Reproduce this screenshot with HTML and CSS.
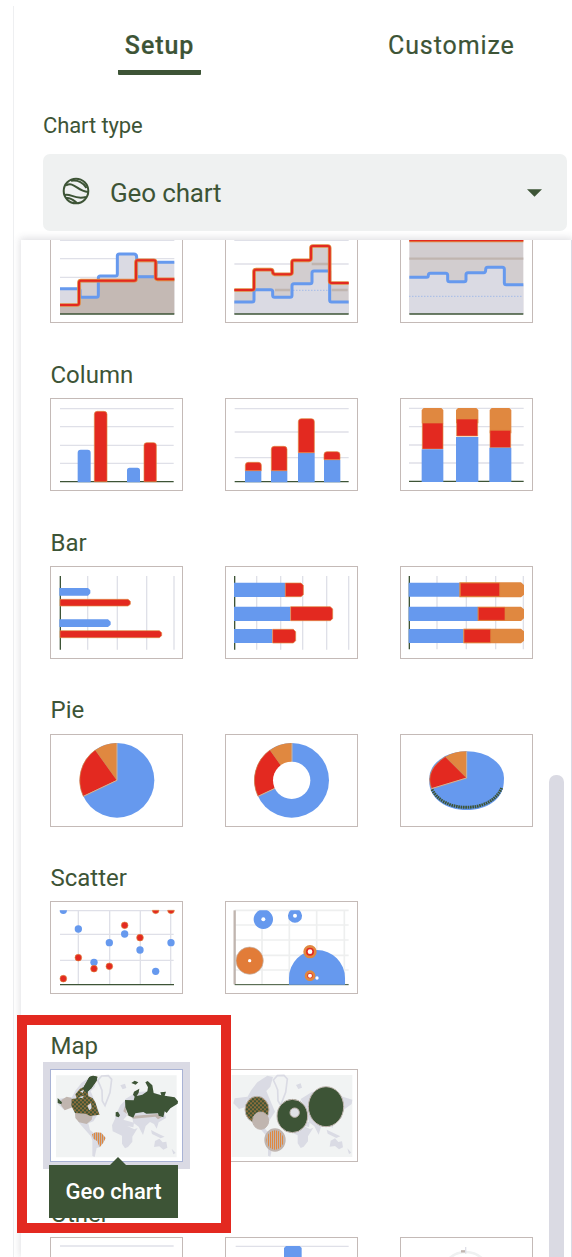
FILE: index.html
```html
<!DOCTYPE html>
<html lang="en">
<head>
<meta charset="utf-8">
<title>Chart editor</title>
<link rel="stylesheet" href="styles.css">
</head>
<body>
<main class="editor">
  <nav class="tabs">
    <span class="tab tab-active">Setup</span>
    <span class="tab">Customize</span>
  </nav>
  <div class="label">Chart type</div>
  <div class="select">
    <svg class="globe" viewBox="0 0 28 28"><circle cx="14" cy="14" r="12.3"/><path d="M4 8.5C12 4 15 14 26 15M9 3.8C16 2.5 22 6 24.5 11M2.5 18C9 16 12 23 24 20M4 21C9 20 12 24 15 26"/></svg>
    <span class="value">Geo chart</span>
    <svg class="caret" viewBox="0 0 16 8"><path d="M0 0H16L8 8Z"/></svg>
  </div>

  <section class="panel">
    <div class="cards">
      <svg class="card" viewBox="60 0 399 279">
        <defs><path id="steps" d="M90 225H141Q147 225 147 219V158Q147 152 153 152H312Q318 152 318 146V97Q318 91 324 91H371Q377 91 377 97V142Q377 148 383 148H433"/></defs>
        <path class="grid" d="M90 31H433M90 86H433M90 142H433"/>
        <path class="area" d="M90 176H150V202H205V138H262V72H320V140H378V97H433V252H90Z"/>
        <path class="area2" d="M90 225H147V152H318V91H377V148H433V252H90Z"/>
        <path class="area3" d="M154 158H201V198H154ZM324 97H372V136H324Z"/>
        <path class="bline" d="M90 176H145Q150 176 150 182V196Q150 202 156 202H199Q205 202 205 196V144Q205 138 211 138H256Q262 138 262 132V78Q262 72 268 72H312Q320 72 320 82V134Q320 140 326 140H372Q378 140 378 134V103Q378 97 384 97H433"/>
        <use href="#steps" class="oline"/><use href="#steps" class="rline"/>
        <path class="axis" d="M90 252H433"/>
      </svg>
      <svg class="card" viewBox="585 0 399 279">
        <defs><path id="steps2" d="M613 180H666Q672 180 672 174V125Q672 119 678 119H722Q728 119 728 125T734 133H780Q786 133 786 127V97Q786 91 792 91H837Q843 91 843 85V54Q843 48 849 48H893Q899 48 899 54V153Q899 159 905 159H956"/></defs>
        <path class="grid" d="M613 31H956M613 102H956"/>
        <path class="area3" d="M613 180H672V119H728V133H786V91H843V48H899V159H956V252H613Z"/>
        <path class="area" d="M613 216H672V179H728V202H786V161H846V123H899V216H956V252H613Z"/>
        <path class="tline" d="M735 180H780M845 102H895M905 180H953"/>
        <path class="dots" d="M790 181H897"/>
        <path class="bline" d="M613 216H666Q672 216 672 210V185Q672 179 678 179H722Q728 179 728 185V196Q728 202 734 202H780Q786 202 786 196V167Q786 161 792 161H840Q846 161 846 155V129Q846 123 852 123H899V210Q899 216 905 216H956"/>
        <use href="#steps2" class="oline"/><use href="#steps2" class="rline"/>
        <path class="axis" d="M613 252H956"/>
      </svg>
      <svg class="card" viewBox="90 15 399 279">
        <path class="area3" d="M118 47H460V267H118Z"/>
        <path class="area" d="M118 157H175V145H233V170H288V143H347V127H403V179H460V267H118Z"/>
        <path class="tline" d="M118 101H460"/>
        <path class="bline" d="M118 157H170Q175 157 175 151T181 145H227Q233 145 233 151V164Q233 170 239 170H282Q288 170 288 164V149Q288 143 294 143H341Q347 143 347 135T353 127H397Q403 127 403 133V173Q403 179 409 179H460"/>
        <path class="dots" d="M118 214H460"/>
        <path class="oline" d="M118 46H460"/><path class="rline" d="M118 46H460"/>
        <path class="axis" d="M118 267H460"/>
      </svg>
    </div>

    <h2>Column</h2>
    <div class="cards">
      <svg class="card" viewBox="30 144 399 279">
        <path class="grid" d="M60 176H401M60 230H401M60 286H401M60 340H401"/>
        <path class="axis" d="M60 395H401"/>
        <path class="blue" d="M113 397V308Q113 299 122 299H143Q152 299 152 308V397ZM261 397V361Q261 353 269 353H292Q300 353 300 361V397Z"/>
        <path class="red" d="M163 395V193Q163 184 172 184H192Q201 184 201 193V395ZM312 395V286Q312 278 320 278H341Q349 278 349 286V395Z"/>
      </svg>
      <svg class="card" viewBox="555 144 399 279">
        <path class="grid" d="M584 176H926M584 246H926M584 323H926"/>
        <path class="axis" d="M584 395H926"/>
        <path class="blue" d="M615 362H664V397H615ZM693 362H742V397H693ZM774 309H824V397H774ZM852 330H901V397H852Z"/>
        <path class="red" d="M616 362V346Q616 337 625 337H655Q664 337 664 346V362ZM694 362V298Q694 289 703 289H732Q741 289 741 298V362ZM775 308V215Q775 206 784 206H814Q823 206 823 215V308ZM852 329V314Q852 305 861 305H891Q900 305 900 314V329Z"/>
      </svg>
      <svg class="card" viewBox="30 54 399 279">
        <path class="grid" d="M57 85H401M57 140H401M57 195H401M57 249H401"/>
        <path class="axis" d="M57 304H401"/>
        <path class="orange" d="M95 130V90L101 84H154L160 90V130ZM198 130V90L204 84H259L265 90V130ZM299 160V90L305 84H358L364 90V160Z"/>
        <path class="red" d="M97 129H159V207H97ZM200 117H263V168H200ZM300 151H362V203H300Z"/>
        <path class="blue" d="M95 208H160V306H95ZM198 171H265V306H198ZM298 203H364V306H298Z"/>
      </svg>
    </div>

    <h2>Bar</h2>
    <div class="cards">
      <svg class="card" viewBox="30 138 399 279">
        <path class="grid" d="M143 168V389M232 168V389M320 168V389M402 168V389"/>
        <path class="axis" d="M61 168V389"/>
        <path class="blue" d="M58 204H144L151 211V220L144 227H58ZM58 298H204L212 305V314L204 321H58Z"/>
        <path class="red" d="M60 238H264L271 244V253L264 258H60ZM60 332H358L365 338V347L358 353H60Z"/>
      </svg>
      <svg class="card" viewBox="555 138 399 279">
        <path class="grid" d="M650 168V389M722 168V389M788 168V389M860 168V389M926 168V389"/>
        <path class="axis" d="M584 168V389"/>
        <path class="blue" d="M582 188H736V231H582ZM582 260H751V303H582ZM582 327H697V369H582Z"/>
        <path class="red" d="M736 189H783L790 196V224L783 230H736ZM752 260H871L878 267V296L871 302H752ZM698 328H760L767 335V362L760 369H698Z"/>
      </svg>
      <svg class="card" viewBox="30 558 399 279">
        <path class="grid" d="M141 588V808M229 588V808M317 588V808M400 588V808"/>
        <path class="axis" d="M58 588V808"/>
        <path class="blue" d="M56 608H210V650H56ZM56 680H264V723H56ZM56 747H221V789H56Z"/>
        <path class="orange" d="M208 607H393L402 615V644L393 652H208ZM263 680H393L402 688V715L393 723H263ZM220 746H393L402 754V782L393 790H220Z"/>
        <path class="red" d="M211 609H329V649H211ZM265 682H345V721H265ZM222 748H302V788H222Z"/>
      </svg>
    </div>

    <h2>Pie</h2>
    <div class="cards">
      <svg class="card" viewBox="30 131 399 279">
        <circle class="blue" cx="231" cy="270" r="112"/>
        <path class="red" d="M231 270L130 318A112 112 0 0 1 166 179Z"/>
        <path class="orange" d="M231 270L166 179A112 112 0 0 1 231 158Z"/>
        <path class="seam" d="M231 158V270L130 318"/>
      </svg>
      <svg class="card" viewBox="555 131 399 279">
        <circle class="blue" cx="755" cy="270" r="112"/>
        <path class="red" d="M755 270L654 318A112 112 0 0 1 690 179Z"/>
        <path class="orange" d="M755 270L690 179A112 112 0 0 1 756 158Z"/>
        <path class="seam" d="M756 158V270L654 318"/>
        <circle class="hole" cx="755" cy="270" r="56"/>
      </svg>
      <svg class="card" viewBox="30 41 399 279">
        <path class="blue" d="M118 173V190C122 235 168 269 230 269S338 235 341 190V173Z"/>
        <ellipse class="blue" cx="230" cy="173" rx="112" ry="80"/>
        <path class="rim" d="M126 207C145 244 185 261 230 261S318 242 335 203"/>
        <path class="red" d="M230 173L125 205Q103 151 166 109Z"/>
        <path class="orange" d="M230 173L166 109Q195 93 230 93Z"/>
        <path class="seam" d="M230 93V173L124 205"/>
      </svg>
    </div>

    <h2>Scatter</h2>
    <div class="cards">
      <svg class="card" viewBox="30 123 399 279">
        <path class="grid" d="M60 152H401M60 223H401M60 301H401M115 152V373M209 152V373M301 152V373M392 152V373"/>
        <path class="axis" d="M60 374H402"/>
        <g class="blue"><path d="M59 151H81A11 11 0 0 1 59 151Z"/><circle cx="115" cy="207" r="11"/><circle cx="162" cy="307" r="11"/><circle cx="208" cy="248" r="11"/><circle cx="254" cy="222" r="11"/><circle cx="300" cy="270" r="11"/><circle cx="347" cy="334" r="11"/><circle cx="393" cy="248" r="11"/></g>
        <g class="red"><path d="M337 151H357A10 10 0 0 1 337 151ZM383 151H403A10 10 0 0 1 383 151Z"/><circle cx="70" cy="356" r="10"/><circle cx="115" cy="293" r="10"/><circle cx="162" cy="326" r="10"/><circle cx="208" cy="319" r="10"/><circle cx="254" cy="196" r="10"/><circle cx="300" cy="233" r="10"/></g>
      </svg>
      <svg class="card" viewBox="555 123 399 279">
        <path class="pale" d="M584 151H926M584 195H926M584 240H926M584 286H926M584 330H926M666 151V373M748 151V373M830 151V373M913 151V373"/>
        <path class="tline" d="M584 151V373"/>
        <path class="axis thin" d="M584 374H926"/>
        <path class="blue" d="M681 151A29 29 0 1 1 659 151ZM778 151A21 21 0 1 1 752 151ZM747 374V354A84 84 0 0 1 915 354V374Z"/>
        <circle class="bubble" cx="629" cy="302" r="41"/>
        <g class="target"><circle cx="810" cy="275" r="16"/><circle cx="810" cy="347" r="12"/></g>
        <g class="hole"><circle cx="670" cy="178" r="6"/><circle cx="765" cy="167" r="6"/><circle cx="629" cy="302" r="5"/><circle cx="810" cy="275" r="7"/><circle cx="810" cy="347" r="6"/><circle cx="831" cy="354" r="5"/></g>
      </svg>
    </div>

    <h2>Map</h2>
    <div class="cards">
      <svg class="card card-selected" viewBox="120 191 399 279">
        <defs>
          <pattern id="mix" width="12" height="12" patternUnits="userSpaceOnUse"><path fill="#3d5436" d="M0 0H12V12H0Z"/><path fill="#e08840" d="M1 1H5V5H1ZM7 7H11V11H7Z"/></pattern>
          <pattern id="warm" width="6" height="9" patternUnits="userSpaceOnUse"><path fill="#c0b5af" d="M0 0H6V9H0Z"/><path fill="#e08840" d="M0 0H3V9H0Z"/></pattern>
          <g id="world">
            <path d="M138 210H500V456H138Z" fill="#f1f3f3"/>
            <g fill="#dadbe4">
              <path d="M183 280L197 255L215 232L245 212L262 216L254 245L242 258L268 320L250 348L235 354L240 374L252 384L280 390L287 398L270 425L260 428L254 455L247 452V405L242 392L224 372L207 352L196 325Z"/>
              <path d="M331 240L345 235L349 248L338 252ZM147 280L185 275L180 306L160 312L143 295ZM317 330L331 300L346 285L350 332L340 343L372 352L370 366L352 362L373 372L383 368L367 394V409L354 425L345 429L336 415V391L308 378L306 360L315 340Z"/>
              <path d="M365 330L410 322L462 318L468 338L446 351L440 370L432 356L420 350L407 362L399 389L386 364L370 352ZM423 374L445 385L464 394L452 399L426 386ZM435 407L448 400L458 411L469 409L472 427L460 433L448 423L432 425ZM485 430L497 443L490 447Z"/>
              <path d="M345 282L380 260L415 258L455 270L500 284L498 297L462 323L447 320L410 325L370 337Z"/>
            </g>
            <path d="M263 225L275 212L295 211L305 222L300 262L285 301L277 287L276 255L270 240Z" fill="none" stroke="#dadbe4" stroke-width="5"/>
          </g>
        </defs>
        <use href="#world"/>
        <path d="M154 284L170 274L185 278L188 306L164 315L153 300ZM195 323H250L245 343L230 356L207 351L196 338ZM345 302L352 330L370 337L375 331L442 326L455 336L444 342L436 334L370 340L340 318Z" fill="#c0b5af"/>
        <path d="M185 281L200 279L196 267L210 250L221 245L238 215L249 211L262 214L260 226L244 249L233 258L235 272L248 279L256 291L264 317L269 328L240 332L227 325L195 323L184 301Z" fill="url(#mix)"/>
        <path d="M221 245L238 215L249 211L262 214L260 226L244 249L230 262L222 256Z" fill="#3d5436"/>
        <path d="M232 301L243 293L245 309L238 315ZM210 258L222 254L218 263ZM205 276L222 271L217 279Z" fill="#dadbe4"/>
        <path d="M246 387L256 381L274 382L287 398L280 412L269 426L261 407L250 400Z" fill="url(#warm)"/>
        <g class="green">
          <path d="M143 278L156 291L154 297L143 293ZM317 321L324 319L330 330L326 336L317 333ZM345 284L371 285L374 274L369 268L372 259L388 250L386 262L380 272L397 268L412 258L414 246L406 231L413 227L427 240L431 263L454 270L451 261L468 259L464 271L494 276L504 288L503 295L481 309L470 323L464 318L460 336L446 331L444 324L409 325L400 320L376 324L370 337L356 331L346 306ZM364 233L374 226L385 231L377 238Z"/>
        </g>
      </svg>
      <svg class="card" viewBox="45 56 399 279">
        <use href="#world" x="-73" y="-136"/>
        <g stroke="#c0b5af" stroke-width="3">
          <ellipse cx="141" cy="178" rx="36" ry="40" fill="url(#mix)"/>
          <ellipse cx="152" cy="211" rx="24" ry="26" fill="#c0b5af"/>
          <ellipse cx="195" cy="269" rx="29" ry="32" fill="url(#warm)" stroke-width="6"/>
          <ellipse cx="247" cy="197" rx="46" ry="50" fill="#3d5436"/>
          <circle cx="254" cy="187" r="14" fill="#dfe1e6"/>
          <ellipse cx="348" cy="169" rx="53" ry="60" fill="#3d5436"/>
        </g>
      </svg>
      <div class="tooltip">Geo chart</div>
    </div>

    <h2>Other</h2>
    <div class="cards">
      <svg class="card" viewBox="120 696 399 279"><path class="grid" d="M150 723H491"/></svg>
      <svg class="card" viewBox="45 561 399 279"><path class="grid" d="M77 589H416"/><path class="blue" d="M222 594L228 588H269L275 594V640H222Z"/></svg>
      <svg class="card" viewBox="90 141 399 279"><circle cx="287" cy="258" r="72" fill="none" stroke="#eff1f1" stroke-width="8"/><path class="tline" d="M273 184H287"/><path class="grid" d="M287 171V191"/></svg>
    </div>
    <div class="scrollbar"></div>
  </section>
  <div class="highlight"></div>
</main>
</body>
</html>
```
FILE: styles.css
```css
* { box-sizing: border-box; }

body {
  margin: 0;
  background: #fff;
  color: #3d5436;
  font-family: Roboto, "Liberation Sans", sans-serif;
}

.editor {
  position: relative;
  display: flex;
  flex-direction: column;
  width: 572px;
  height: 1257px;
  overflow: hidden;
}

.editor::before {
  content: "";
  position: absolute;
  left: 13px;
  top: 6px;
  bottom: 0;
  width: 1px;
  background: #eeeff1;
}

.tabs {
  display: grid;
  grid-template-columns: 83px 126px;
  column-gap: 187px;
  padding: 28px 0 0 118px;
  height: 112px;
  font-size: 25px;
  letter-spacing: 0.9px;
  line-height: 36px;
}

.tab { height: 47px; text-align: center; white-space: nowrap; -webkit-text-stroke: 0.2px; }

.tab-active {
  font-weight: 500;
  border-bottom: 5px solid #3d5436;
  border-radius: 4px 4px 1px 1px;
}

.label { height: 42px; padding-left: 43px; font-size: 22px; line-height: 27px; letter-spacing: -0.1px; }

.select {
  display: flex;
  align-items: center;
  width: 524px;
  height: 77px;
  margin-left: 43px;
  padding: 0 25px 0 19px;
  border-radius: 7px;
  background: #eff1f1;
}

.globe { width: 28px; height: 28px; margin-top: -4px; fill: none; stroke: #3d5436; stroke-width: 2; }
.value { margin-left: 20px; font-size: 26px; line-height: 34px; letter-spacing: -0.15px; }
.caret { width: 15px; height: 8px; margin-left: auto; fill: #3d5436; }

.panel {
  position: relative;
  width: 551px;
  height: 1017px;
  margin: 9px 0 0 21px;
  padding-left: 29px;
  border-right: 1px solid #dadae4;
  box-shadow: 0 -1px 7px 1px rgba(61, 64, 80, 0.16);
  background: #fff;
  clip-path: inset(-10px 0 0 -8px);
}

.cards { position: relative; display: flex; gap: 42px; height: 93px; }
.panel > .cards:first-child { height: 83.4px; overflow: hidden; align-items: flex-end; }

h2 {
  height: 74.75px;
  margin: 0;
  padding: 37.4px 0 0 0.5px;
  font-size: 24px;
  font-weight: 400;
  line-height: 28px;
}

.card {
  flex: none;
  width: 133px;
  height: 93px;
  background: #fff;
  outline: 1px solid #c4bab7;
  outline-offset: -1px;
}

.card-selected { outline-color: #a9b3d5; box-shadow: 0 0 0 7px #dadae4; }

.grid { fill: none; stroke: #dfe0e8; stroke-width: 4; }
.pale { fill: none; stroke: #eeefef; stroke-width: 5; }
.axis { fill: none; stroke: #3d5436; stroke-width: 4; }
.thin { stroke-width: 3; }
.area { fill: #dadae3; }
.area2 { fill: #c4b9b4; }
.area3 { fill: #d2cdcf; }
.bline, .oline, .rline { fill: none; stroke-linejoin: round; }
.bline { stroke: #6699ee; stroke-width: 9; }
.oline { stroke: #e08840; stroke-width: 11; }
.rline { stroke: #e32920; stroke-width: 6; }
.tline { fill: none; stroke: #c0b5af; stroke-width: 7; }
.dots { fill: none; stroke: #6699ee; stroke-width: 2; stroke-dasharray: 3 6; }
.blue { fill: #6699ee; }
.red { fill: #e32920; stroke: #e08840; stroke-width: 2; }
.orange { fill: #e08840; }
.green { fill: #3d5436; }
.hole { fill: #fff; }
.seam { fill: none; stroke: #c8b5a5; stroke-width: 3; }
.rim { fill: none; stroke: #3d5436; stroke-width: 9; stroke-dasharray: 5 2; }
.bubble { fill: #e27c38; stroke: #c0b5af; stroke-width: 2; }
.target { fill: #e32920; stroke: #e08840; stroke-width: 8; }

.tooltip {
  position: absolute;
  left: -1px;
  top: 96px;
  width: 129px;
  height: 53px;
  background: #3d5436;
  color: #fff;
  font-size: 22px;
  font-weight: 500;
  line-height: 54px;
  text-align: center;
}

.tooltip::before {
  content: "";
  position: absolute;
  left: 60px;
  top: -8px;
  border: 9px solid transparent;
  border-top: 0;
  border-bottom-color: #3d5436;
}

.scrollbar {
  position: absolute;
  left: 528px;
  top: 535px;
  bottom: 0;
  width: 15px;
  border-radius: 7px 7px 0 0;
  background: #dadae3;
}

.highlight {
  position: absolute;
  left: 17px;
  top: 1015px;
  width: 214px;
  height: 218px;
  border: 10px solid #e32920;
}
```
